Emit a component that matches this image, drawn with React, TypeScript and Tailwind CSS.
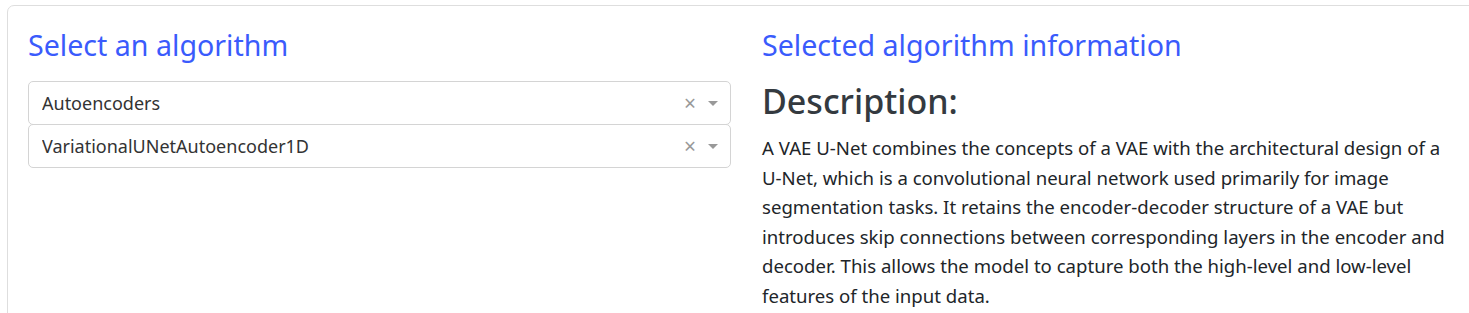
import React from 'react';

const font = { fontFamily: '"Noto Sans", "Open Sans", sans-serif' };

const Dropdown = ({ value }: { value: string }) => (
  <div className="flex h-[44px] items-center rounded-[5px] border border-[#d4d4d4] bg-white pl-[13px] pr-[12px] -mt-px first:mt-0">
    <span className="flex-1 truncate text-[18px] text-[#333333]">{value}</span>
    <span className="mr-[12px] text-[21px] leading-none text-[#999999]">×</span>
    <span className="h-0 w-0 border-x-[5px] border-t-[5px] border-x-transparent border-t-[#999999]" />
  </div>
);

const App = () => {
  return (
    <div className="h-[313px] w-[1469px] overflow-hidden bg-white" style={font}>
      <div className="ml-[7px] mt-[5px] w-[1500px] rounded-tl-[7px] border border-[#dedede] pl-[20px] pt-[21px] pb-[30px]">
        <div className="flex gap-[31px]">
          <div className="w-[703px]">
            <h3 className="text-[28.6px] leading-[36px] text-[#3a5bfc]">Select an algorithm</h3>
            <div className="mt-[18px] flex flex-col">
              <Dropdown value="Autoencoders" />
              <Dropdown value="VariationalUNetAutoencoder1D" />
            </div>
          </div>
          <div className="w-[703px]">
            <h3 className="text-[28.6px] leading-[36px] text-[#3a5bfc]">Selected algorithm information</h3>
            <h2 className="mt-[14px] text-[34px] font-medium leading-[48px] text-[#343a40]">Description:</h2>
            <p className="mt-[8px] w-[695px] text-[18.6px] leading-[29.6px] text-[#212529]">
              A VAE U-Net combines the concepts of a VAE with the architectural design of a U-Net, which is a
              convolutional neural network used primarily for image segmentation tasks. It retains the
              encoder-decoder structure of a VAE but introduces skip connections between corresponding layers in
              the encoder and decoder. This allows the model to capture both the high-level and low-level
              features of the input data.
            </p>
          </div>
        </div>
      </div>
    </div>
  );
};

export default App;
